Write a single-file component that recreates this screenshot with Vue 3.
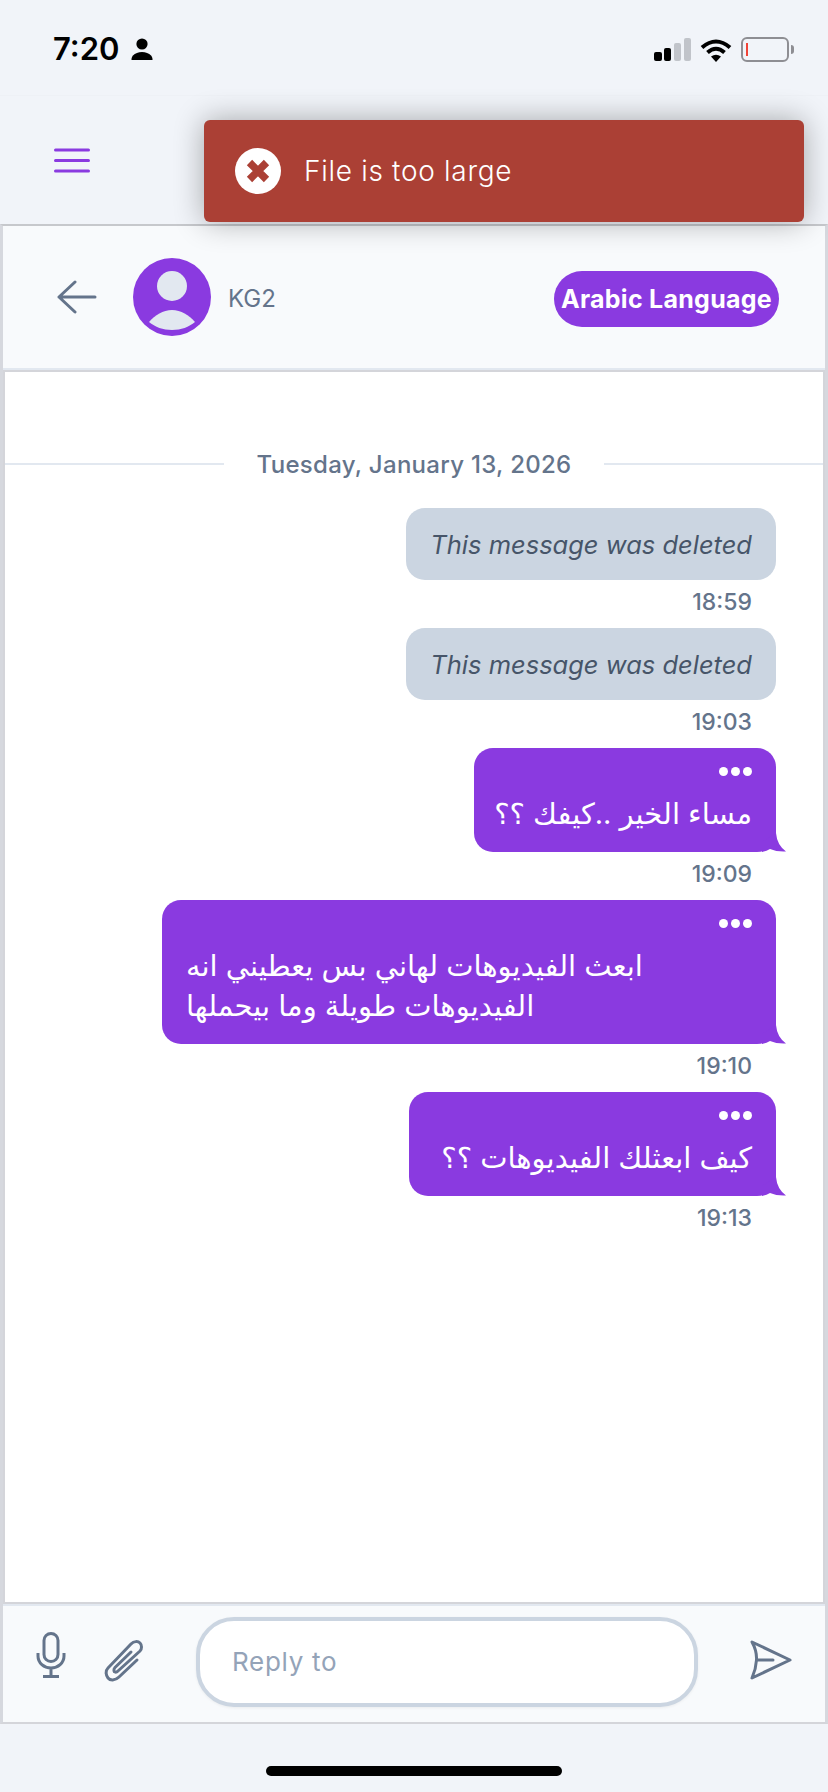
<script setup>
const messages = [
  { id: 1, deleted: true, lines: ['This message was deleted'], time: '18:59' },
  { id: 2, deleted: true, lines: ['This message was deleted'], time: '19:03' },
  { id: 3, width: 302, lines: ['مساء الخير ..كيفك ؟؟'], time: '19:09' },
  { id: 4, width: 614, multi: true, lines: ['ابعث الفيديوهات لهاني بس يعطيني انه', 'الفيديوهات طويلة وما بيحملها'], time: '19:10' },
  { id: 5, width: 367, lines: ['كيف ابعثلك الفيديوهات ؟؟'], time: '19:13' },
]
</script>

<template>
  <div class="phone">
    <div class="status">
      <div class="clock">
        <span>7:20</span>
        <svg width="22" height="23" viewBox="0 0 22 23"><circle cx="11" cy="6" r="5.6" fill="#000"/><path d="M0.5 22c0-1 0-3 1.500-4.500C4 15.500 7.500 14 11 14s7 1.500 9 3.500c1.500 1.500 1.500 3.500 1.500 4.500z" fill="#000"/></svg>
      </div>
      <div class="indicators">
        <svg width="38" height="24" viewBox="0 0 38 24">
          <rect x="0" y="14" width="8" height="9" rx="2" fill="#000"/>
          <rect x="10" y="10" width="7" height="13" rx="2" fill="#000"/>
          <rect x="20" y="5" width="7" height="18" rx="2" fill="#c1c4ca"/>
          <rect x="30" y="0" width="7" height="23" rx="2" fill="#c1c4ca"/>
        </svg>
        <svg width="32" height="24" viewBox="0 0 32 24">
          <path d="M2 9.500Q16-2.500 30 9.500M7.500 14.500Q16 7 24.500 14.500" fill="none" stroke="#000" stroke-width="4"/>
          <path d="M11 18.500Q16 15 21 18.500L16 24z" fill="#000"/>
        </svg>
        <div class="battery"><i></i></div>
        <div class="battery-tip"></div>
      </div>
    </div>

    <div class="topbar">
      <svg class="burger" width="36" height="25" viewBox="0 0 36 25">
        <path d="M1.500 2h33M1.500 12.500h33M1.500 23h33" stroke="#8a3ae0" stroke-width="3" stroke-linecap="round"/>
      </svg>
    </div>

    <div class="toast">
      <svg width="46" height="46" viewBox="0 0 46 46">
        <circle cx="23" cy="23" r="23" fill="#fff"/>
        <path d="M14.500 14.500l17 17M31.500 14.500l-17 17" stroke="#ab4035" stroke-width="7.500"/>
      </svg>
      <span>File is too large</span>
    </div>

    <div class="card">
      <div class="chat-head">
        <svg class="back" width="40" height="34" viewBox="0 0 40 34">
          <path d="M18 2L2 17l16 15M2 17h36" fill="none" stroke="#64748b" stroke-width="3" stroke-linecap="round" stroke-linejoin="round"/>
        </svg>
        <svg class="avatar" width="78" height="78" viewBox="0 0 78 78">
          <circle cx="39" cy="39" r="39" fill="#8a3ae0"/>
          <circle cx="39" cy="28" r="15" fill="#e2e8f0"/>
          <path d="M16 64c6-7 14-12 23-12s17 5 23 12c-6 5-14 8-23 8s-17-3-23-8z" fill="#e2e8f0"/>
        </svg>
        <span class="name">KG2</span>
        <span class="lang">Arabic Language</span>
      </div>

      <div class="messages">
        <div class="date">
          <i></i>
          <span>Tuesday, January 13, 2026</span>
          <i></i>
        </div>
        <div v-for="m in messages" :key="m.id" class="msg">
          <div v-if="m.deleted" class="bubble deleted">{{ m.lines[0] }}</div>
          <div v-else class="bubble" :style="{ width: m.width + 'px' }">
            <div class="dots"><b></b><b></b><b></b></div>
            <div class="text" :class="{ multi: m.multi }" dir="rtl">
              <div v-for="l in m.lines" :key="l">{{ l }}</div>
            </div>
            <svg class="tail" width="24" height="20" viewBox="0 0 24 20">
              <path d="M14 1Q15 13 24 19.500 15 20 8 17 5 19 0 20L0 10z" fill="#8a3ae0"/>
            </svg>
          </div>
          <div class="time">{{ m.time }}</div>
        </div>
      </div>

      <div class="composer">
        <svg class="mic" width="30" height="46" viewBox="0 0 30 46">
          <rect x="8" y="1.500" width="14" height="28" rx="7" fill="none" stroke="#64748b" stroke-width="3"/>
          <path d="M2 21v3c0 7 6 12 13 12s13-5 13-12v-3M15 36v8M7 44.500h16" fill="none" stroke="#64748b" stroke-width="3"/>
        </svg>
        <svg class="clip" width="40" height="44" viewBox="0 0 40 44">
          <path d="M33 22L15 39c-4 4-9 3.500-11 1s-3-7 0-10L27 6c3-3 7-3 9-1s2 6 0 8L14 33c-2 2-4 1-4 0s-.5-2 1-3.500L27 14" fill="none" stroke="#64748b" stroke-width="3" stroke-linecap="round"/>
        </svg>
        <input class="reply" type="text" placeholder="Reply to" />
        <svg class="send" width="42" height="40" viewBox="0 0 42 40">
          <path d="M40 20L2 2q5 9 4.500 18T2 38zM6.500 20H23" fill="none" stroke="#64748b" stroke-width="3" stroke-linecap="round" stroke-linejoin="round"/>
        </svg>
      </div>
    </div>

    <div class="home"><div class="home-bar"></div></div>
  </div>
</template>

<style>
html, body { margin: 0; background: #f1f4f9; }
</style>

<style scoped>
.phone {
  position: relative;
  width: 828px;
  height: 1792px;
  overflow: hidden;
  display: flex;
  flex-direction: column;
  background: #f1f4f9;
  font-family: Inter, "DejaVu Sans", sans-serif;
  color: #64748b;
}
.status {
  height: 96px;
  flex: none;
  box-sizing: border-box;
  padding: 30px 34px 0 53px;
  display: flex;
  justify-content: space-between;
  align-items: flex-start;
  border-bottom: 1px solid #eef1f6;
}
.clock {
  display: flex;
  align-items: center;
  gap: 12px;
  color: #000;
  font-size: 31px;
  font-weight: 600;
  line-height: 38px;
}
.indicators {
  display: flex;
  align-items: center;
  gap: 8px;
  padding-top: 7px;
}
.battery {
  width: 48px;
  height: 25px;
  box-sizing: border-box;
  border: 2px solid #8e8e93;
  border-radius: 6px;
  padding: 4px 3px;
  margin-left: 1px;
}
.battery i {
  display: block;
  width: 2px;
  height: 100%;
  background: #f04438;
}
.battery-tip {
  width: 3px;
  height: 9px;
  margin-left: -6px;
  background: #8e8e93;
  border-radius: 0 3px 3px 0;
}
.topbar {
  height: 128px;
  flex: none;
  box-sizing: border-box;
  padding: 52px 0 0 54px;
}
.burger { display: block; }
.toast {
  position: absolute;
  left: 204px;
  top: 120px;
  width: 600px;
  height: 102px;
  box-sizing: border-box;
  padding-left: 31px;
  display: flex;
  align-items: center;
  gap: 23px;
  background: #ab4035;
  border-radius: 6px;
  box-shadow: 0 0 30px rgba(0, 0, 0, 0.32);
  color: #fff;
  font-size: 28px;
  font-weight: 300;
  letter-spacing: 0.7px;
  z-index: 2;
}
.card {
  flex: 1;
  display: flex;
  flex-direction: column;
  min-height: 0;
  border: 3px solid #d6d8de;
  border-bottom: 2px solid #d4d5da;
  border-top: 2px solid #c6c8cc;
  background: #f8fafc;
}
.chat-head {
  height: 144px;
  flex: none;
  box-sizing: border-box;
  padding: 0 46px 0 54px;
  display: flex;
  align-items: center;
  border-bottom: 2px solid #e2e8f0;
}
.avatar { margin-left: 36px; }
.name {
  margin-left: 17px;
  margin-top: 2px;
  font-size: 24px;
}
.lang {
  margin-left: auto;
  margin-top: 4px;
  height: 56px;
  line-height: 56px;
  padding: 0 7px;
  border-radius: 28px;
  background: #8a3ae0;
  color: #fff;
  font-size: 25px;
  font-weight: 700;
  letter-spacing: 0.27px;
}
.messages {
  flex: 1;
  min-height: 0;
  background: #fff;
  border: 2px solid #d4d5da;
  padding-top: 68px;
}
.date {
  display: flex;
  align-items: center;
  gap: 32px;
  height: 48px;
  margin-bottom: 20px;
  font-size: 24px;
  font-weight: 500;
  letter-spacing: 0.3px;
  white-space: nowrap;
}
.date i {
  flex: 1;
  height: 2px;
  background: #e2e8f0;
}
.msg {
  display: flex;
  flex-direction: column;
  align-items: flex-end;
  padding-right: 47px;
}
.bubble {
  position: relative;
  box-sizing: border-box;
  padding: 14px 24px 18px;
  border-radius: 19px;
  background: #8a3ae0;
  color: #fff;
}
.bubble.deleted {
  height: 72px;
  padding: 0 24px;
  display: flex;
  align-items: center;
  background: #cbd5e1;
  color: #475569;
  font-size: 25.5px;
  font-style: italic;
  white-space: nowrap;
}
.dots {
  display: flex;
  justify-content: flex-end;
  gap: 3px;
  height: 24px;
  padding-top: 5px;
  box-sizing: border-box;
}
.dots b {
  width: 9px;
  height: 9px;
  border-radius: 50%;
  background: #fff;
}
.text {
  padding-top: 8px;
  font-size: 29px;
  line-height: 40px;
  white-space: nowrap;
}
.text.multi { text-align: left; }
.tail {
  position: absolute;
  right: -10px;
  bottom: 0;
}
.time {
  height: 48px;
  line-height: 44px;
  padding-right: 24px;
  font-size: 23px;
  font-weight: 500;
}
.composer {
  height: 118px;
  flex: none;
  box-sizing: border-box;
  padding: 0 31px 5px 33px;
  display: flex;
  align-items: center;
  border-top: 2px solid #e2e8f0;
}
.mic { margin-bottom: 13px; }
.clip { margin-left: 38px; margin-bottom: 3px; }
.reply {
  width: 502px;
  height: 90px;
  flex: none;
  box-sizing: border-box;
  margin-left: 52px;
  padding: 0 32px;
  border: 4px solid #cbd5e1;
  border-radius: 38px;
  background: #fff;
  outline: none;
  font-family: Inter, sans-serif;
  font-size: 26px;
  letter-spacing: 0.7px;
  color: #334155;
  box-shadow: 0 1px 3px rgba(0, 0, 0, 0.06);
}
.reply::placeholder { color: #94a3b8; opacity: 1; }
.send { margin-left: 52px; margin-bottom: 3px; }
.home {
  height: 68px;
  flex: none;
  display: flex;
  justify-content: center;
  padding-top: 42px;
  box-sizing: border-box;
}
.home-bar {
  width: 296px;
  height: 10px;
  border-radius: 5px;
  background: #000;
}
</style>
